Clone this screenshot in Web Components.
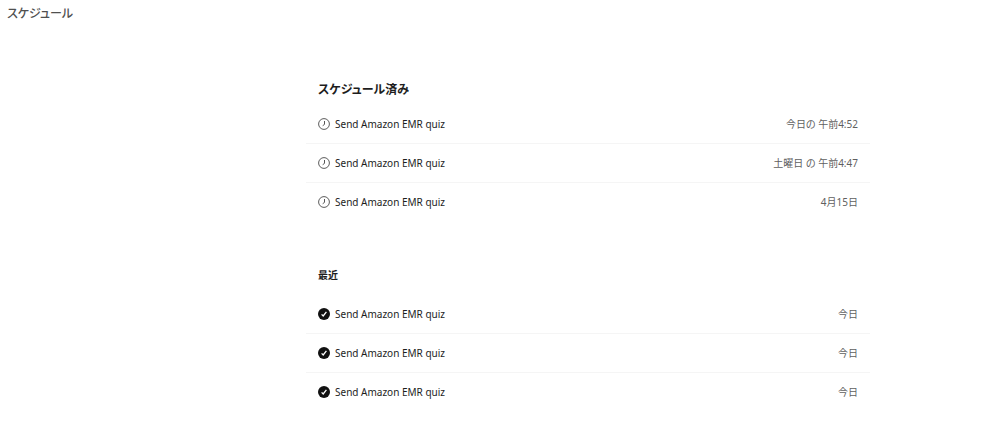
<!DOCTYPE html>
<html lang="ja">
<head>
<meta charset="utf-8">
<meta name="viewport" content="width=device-width, initial-scale=1">
<title>スケジュール</title>
<style>
  body { margin: 0; background: #fff; color: #1d1d1d; font: 10px/20px "Noto Sans", "Noto Sans CJK JP", sans-serif; font-feature-settings: "palt"; }
</style>
</head>
<body>
<schedule-page heading="スケジュール">
  <schedule-section heading="スケジュール済み" size="large">
    <schedule-item status="pending" date="今日の 午前4:52">Send Amazon EMR quiz</schedule-item>
    <schedule-item status="pending" date="土曜日 の 午前4:47">Send Amazon EMR quiz</schedule-item>
    <schedule-item status="pending" date="4月15日">Send Amazon EMR quiz</schedule-item>
  </schedule-section>
  <schedule-section heading="最近">
    <schedule-item status="done" date="今日">Send Amazon EMR quiz</schedule-item>
    <schedule-item status="done" date="今日">Send Amazon EMR quiz</schedule-item>
    <schedule-item status="done" date="今日">Send Amazon EMR quiz</schedule-item>
  </schedule-section>
</schedule-page>
<script>
class StatusIcon extends HTMLElement {
  connectedCallback() {
    const done = this.getAttribute('status') === 'done';
    this.attachShadow({ mode: 'open' }).innerHTML = `
      <style>
        :host { display: block; flex: none; width: 12px; height: 12px; }
        svg { display: block; width: 100%; height: 100%; }
      </style>
      <svg viewBox="0 0 12 12" aria-hidden="true">${done
        ? '<circle cx="6" cy="6" r="6" fill="#111"/><path d="M3.6 6.4 5.2 8 8.4 3.8" fill="none" stroke="#fff" stroke-width="1.3"/>'
        : '<circle cx="6" cy="6" r="5.4" fill="none" stroke="#5c5c5c"/><path d="M6.5 3v3.4L4.7 7.7" fill="none" stroke="#555"/>'}
      </svg>`;
  }
}

class ScheduleItem extends HTMLElement {
  connectedCallback() {
    this.setAttribute('role', 'listitem');
    this.attachShadow({ mode: 'open' }).innerHTML = `
      <style>
        :host { display: flex; align-items: center; gap: 5px; padding: 9px 12px; border-bottom: 1px solid #f5f5f5; }
        :host(:last-of-type) { border-color: transparent; }
        .name { flex: 1; }
        .date { color: #5f5f5f; }
      </style>
      <status-icon status="${this.getAttribute('status')}"></status-icon>
      <span class="name"><slot></slot></span>
      <span class="date">${this.getAttribute('date')}</span>`;
  }
}

class ScheduleSection extends HTMLElement {
  connectedCallback() {
    this.attachShadow({ mode: 'open' }).innerHTML = `
      <style>
        :host { display: block; }
        h2 { margin: 0; padding: 0 12px 10px; font-size: 10px; line-height: 20px; font-weight: 600; }
        :host([size="large"]) h2 { padding-bottom: 5px; font-size: 12px; }
      </style>
      <section>
        <h2>${this.getAttribute('heading')}</h2>
        <div role="list"><slot></slot></div>
      </section>`;
  }
}

class SchedulePage extends HTMLElement {
  connectedCallback() {
    this.attachShadow({ mode: 'open' }).innerHTML = `
      <style>
        :host { display: block; }
        h1 { margin: 0; padding: 4px 7px; font-size: 12px; line-height: 20px; font-weight: 500; color: #505050; }
        main { display: flex; flex-direction: column; gap: 43px; width: 56.4%; margin-left: 30.6%; padding: 52px 0 12px; }
      </style>
      <header><h1>${this.getAttribute('heading')}</h1></header>
      <main><slot></slot></main>`;
  }
}

customElements.define('status-icon', StatusIcon);
customElements.define('schedule-item', ScheduleItem);
customElements.define('schedule-section', ScheduleSection);
customElements.define('schedule-page', SchedulePage);
</script>
</body>
</html>
